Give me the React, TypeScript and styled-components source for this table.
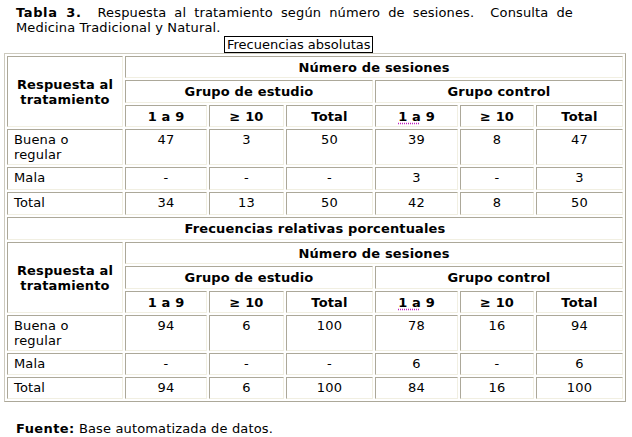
import React from 'react';
import styled, {createGlobalStyle} from "styled-components";

const GlobalStyle = createGlobalStyle`
  * {
    box-sizing: border-box;
  }
  body {
    margin: 0;
    background: #fff;
    color: #000;
    font-family: Verdana, "DejaVu Sans", sans-serif;
    font-size: 13px;
    letter-spacing: 0.15px;
  }
`

type Value = number | string

const widths = [116, 82, 75, 87, 83, 74, 87]

const absolutas: { label: React.ReactNode, values: Value[], h: number }[] = [
    {label: <>Buena o<br/>regular</>, values: [47, 3, 50, 39, 8, 47], h: 35},
    {label: 'Mala', values: ['-', '-', '-', 3, '-', 3], h: 23},
    {label: 'Total', values: [34, 13, 50, 42, 8, 50], h: 23},
]

const relativas: { label: React.ReactNode, values: Value[], h: number }[] = [
    {label: <>Buena o<br/>regular</>, values: [94, 6, 100, 78, 16, 94], h: 36},
    {label: 'Mala', values: ['-', '-', '-', 6, '-', 6], h: 22},
    {label: 'Total', values: [94, 6, 100, 84, 16, 100], h: 22},
]

const HeaderRows = ({heights}: { heights: number[] }) => (
    <>
        <Row $h={heights[0]}>
            <Head rowSpan={3}>Respuesta al<br/>tratamiento</Head>
            <Head colSpan={6}>Número de sesiones</Head>
        </Row>
        <Row $h={heights[1]}>
            <Head colSpan={3}>Grupo de estudio</Head>
            <Head colSpan={3}>Grupo control</Head>
        </Row>
        <Row $h={heights[2]}>
            <Head>1 a 9</Head>
            <Head>≥ 10</Head>
            <Head>Total</Head>
            <Head><Dotted>1 a</Dotted> 9</Head>
            <Head>≥ 10</Head>
            <Head>Total</Head>
        </Row>
    </>
)

const DataRows = ({rows}: { rows: typeof absolutas }) => (
    <>
        {rows.map((row, i) => (
            <Row key={i} $h={row.h}>
                <Cell>{row.label}</Cell>
                {row.values.map((v, j) => (
                    <Cell key={j} $center>{v}</Cell>
                ))}
            </Row>
        ))}
    </>
)

export default function App() {
    return (
        <Page>
            <GlobalStyle/>
            <Caption>
                <CaptionLine $justify>
                    <b>Tabla 3.</b>&nbsp; Respuesta al tratamiento según número de sesiones.&nbsp; Consulta de
                </CaptionLine>
                <CaptionLine>Medicina Tradicional y Natural.</CaptionLine>
            </Caption>
            <TableLabel>Frecuencias absolutas</TableLabel>
            <DataTable>
                <colgroup>
                    {widths.map((w, i) => <Col key={i} $w={w}/>)}
                </colgroup>
                <tbody>
                <HeaderRows heights={[22, 23, 22]}/>
                <DataRows rows={absolutas}/>
                <Row $h={23}>
                    <Head colSpan={7}>Frecuencias relativas porcentuales</Head>
                </Row>
                <HeaderRows heights={[22, 23, 22]}/>
                <DataRows rows={relativas}/>
                </tbody>
            </DataTable>
            <Source><b>Fuente:</b> Base automatizada de datos.</Source>
        </Page>
    )
}

const Page = styled.div`
  width: 632px;
  padding: 5px 0 0 4px;
`

const Caption = styled.div`
  margin: 0 0 1px 12px;
  width: 557px;
  line-height: 15px;

  b {
    letter-spacing: 0.6px;
  }
`

const CaptionLine = styled.div<{ $justify?: boolean }>`
  text-align: ${p => p.$justify ? 'justify' : 'left'};
  text-align-last: ${p => p.$justify ? 'justify' : 'auto'};
`

const TableLabel = styled.div`
  width: fit-content;
  margin-left: 220px;
  border: 1px solid #000;
  padding: 0 2px;
  line-height: 15px;
  letter-spacing: 0;
`

const DataTable = styled.table`
  width: 622px;
  table-layout: fixed;
  border-collapse: separate;
  border-spacing: 2px;
  border: 1px solid;
  border-color: #cdcabe #aca899 #aca899 #cdcabe;
  font-size: 13px;
`

const Col = styled.col<{ $w: number }>`
  width: ${p => p.$w}px;
`

const Row = styled.tr<{ $h: number }>`
  height: ${p => p.$h}px;
`

const Head = styled.th`
  border: 1px solid;
  border-color: #aca899 #f1efe2 #f1efe2 #aca899;
  padding: 2px 4px;
  line-height: 15px;
  font-weight: bold;
  text-align: center;
  vertical-align: middle;
`

const Cell = styled.td<{ $center?: boolean }>`
  border: 1px solid;
  border-color: #aca899 #f1efe2 #f1efe2 #aca899;
  padding: 2px 6px;
  line-height: 15px;
  text-align: ${p => p.$center ? 'center' : 'left'};
  vertical-align: top;
`

const Dotted = styled.span`
  text-decoration: underline dotted #c020c0;
  text-underline-offset: 2px;
`

const Source = styled.p`
  margin: 19px 0 0 12px;
  line-height: 15px;

  b {
    letter-spacing: 0.4px;
  }
`
